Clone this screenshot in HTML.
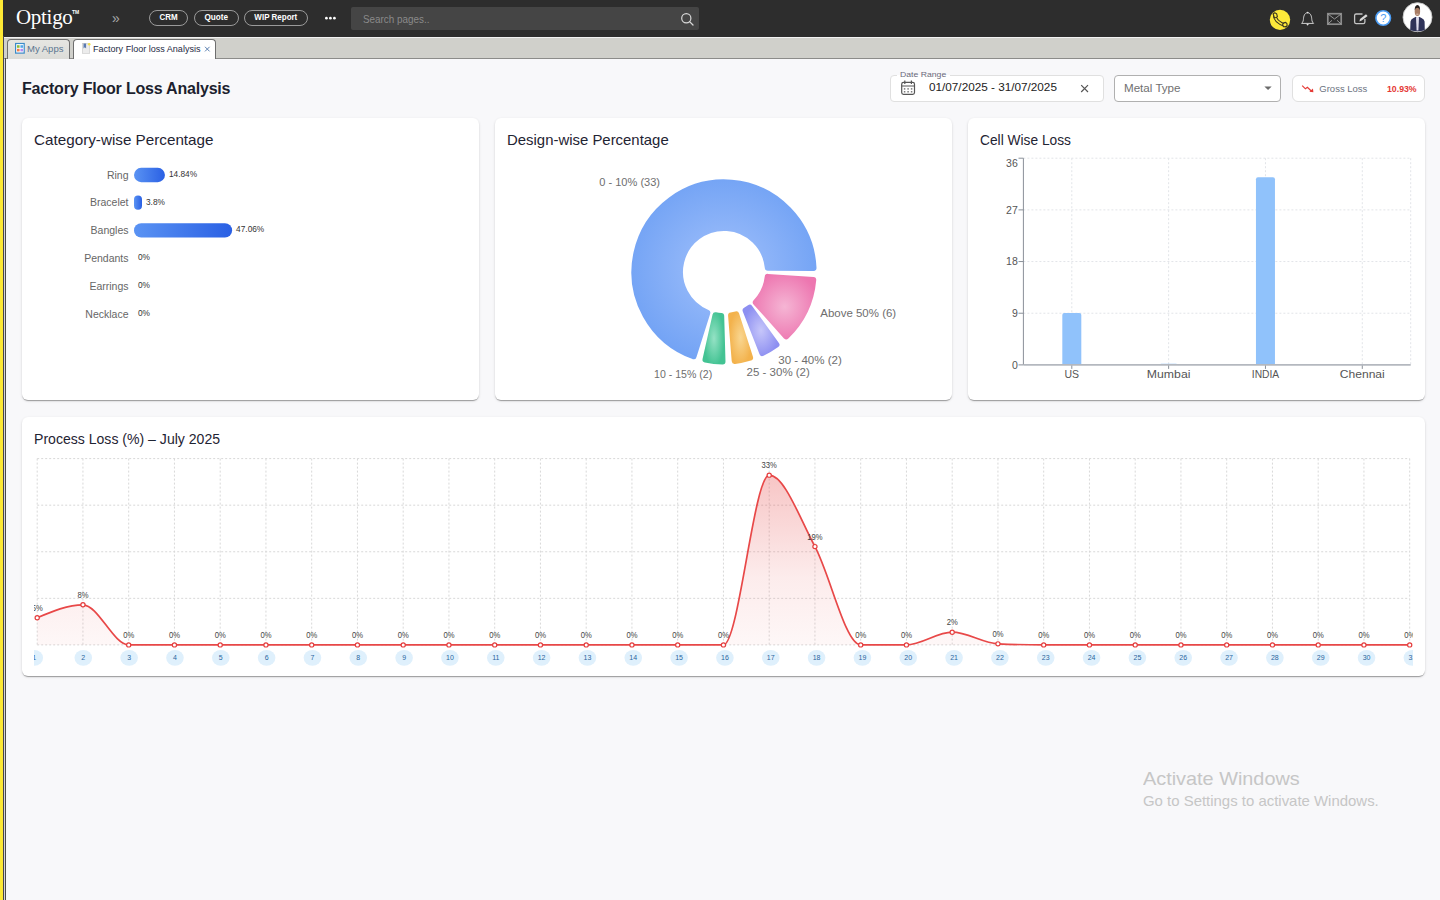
<!DOCTYPE html>
<html><head><meta charset="utf-8">
<style>
*{box-sizing:border-box;margin:0;padding:0}
html,body{width:1440px;height:900px;overflow:hidden;background:#f8f8fa;font-family:"Liberation Sans",sans-serif;position:relative}
.abs{position:absolute;white-space:nowrap;line-height:1}
#ybar{left:0;top:0;width:3px;height:900px;background:#fde935}
#top{left:3px;top:0;width:1437px;height:37px;background:#2d2d2d}
#topline{left:3px;top:37px;width:1437px;height:1px;background:#f2f2f2}
#tabs{left:3px;top:38px;width:1437px;height:21px;background:#d0d0cb;border-bottom:1px solid #8c8c8a}
#lline1{left:3px;top:36px;width:1px;height:864px;background:#48444e}
#lline0{left:4px;top:59px;width:1px;height:841px;background:#d6d6d6}
#lline2{left:5px;top:58px;width:1px;height:842px;background:#4a4a4a}
.pill{position:absolute;top:10px;height:16px;border:1px solid #9a9a9a;border-radius:8px;color:#fff;font-weight:bold;font-size:8.5px;line-height:13px;text-align:center}
.tab{position:absolute;top:39px;height:20px;border:1px solid #6e6e6e;border-bottom:none;border-radius:4px 4px 0 0;font-size:9.5px;line-height:1;color:#333}
.card{position:absolute;background:#fff;border-radius:6px;box-shadow:0 2px 1px -1px rgba(0,0,0,.2),0 1px 1px 0 rgba(0,0,0,.14),0 1px 3px 0 rgba(0,0,0,.12)}
.ctitle{position:absolute;left:12px;top:16px;font-size:13.75px;color:#1f2433;line-height:1;white-space:nowrap}
</style></head><body>
<div id="ybar" class="abs"></div>
<div id="top" class="abs"></div>
<div id="topline" class="abs"></div>
<div id="tabs" class="abs"></div>

<!-- logo -->
<div class="abs" style="left:16px;top:7px;font-family:'Liberation Serif',serif;font-size:21px;color:#fff;letter-spacing:-0.3px">Optigo</div>
<div class="abs" style="left:72px;top:10px;font-size:5px;color:#fff;font-weight:bold">TM</div>
<div class="abs" style="left:112px;top:11px;font-size:14px;color:#a8a8a8">&#187;</div>

<div class="pill" style="left:149px;width:39px"><span style="display:inline-block;transform:scaleX(.94)">CRM</span></div>
<div class="pill" style="left:194px;width:45px"><span style="display:inline-block;transform:scaleX(.96)">Quote</span></div>
<div class="pill" style="left:244px;width:64px"><span style="display:inline-block;transform:scaleX(.94)">WIP Report</span></div>

<div class="abs" style="left:351px;top:7px;width:348px;height:23px;background:#454545;border-radius:2px"></div>
<div class="abs" style="left:363px;top:13.7px;font-size:10.5px;color:#8a8a8a;transform:scaleX(0.94);transform-origin:0 0">Search pages..</div>

<!-- tabs -->
<div class="tab" style="left:7px;width:63px;background:linear-gradient(#e6e6e2,#dcdcd8)"><span style="position:absolute;left:19px;top:4px;color:#5a7590">My Apps</span></div>
<div class="tab" style="left:73px;width:143px;background:#fff"><span style="position:absolute;left:19px;top:4px;color:#1e2a44;transform:scaleX(.951);transform-origin:0 0">Factory Floor loss Analysis</span></div>

<div id="lline1" class="abs"></div>
<div id="lline0" class="abs"></div>
<div id="lline2" class="abs"></div>

<!-- header -->
<div class="abs" style="left:22px;top:81px;font-size:16px;font-weight:bold;color:#1c1f2e;letter-spacing:-0.2px">Factory Floor Loss Analysis</div>

<div class="abs" style="left:890px;top:75px;width:214px;height:27px;border:1px solid #e0e0e0;border-radius:4px;background:#fff"></div>
<div class="abs" style="left:897px;top:72px;width:53px;height:5px;background:#fff"></div><div class="abs" style="left:897px;top:72px;width:53px;height:3px;background:#f8f8fa"></div>
<div class="abs" style="left:900px;top:70.7px;font-size:7.5px;color:#6a6a7a;transform:scaleX(1.155);transform-origin:0 0">Date Range</div>
<div class="abs" style="left:929px;top:82px;font-size:11px;color:#222;transform:scaleX(1.067);transform-origin:0 0">01/07/2025 - 31/07/2025</div>

<div class="abs" style="left:1114px;top:75px;width:167px;height:27px;border:1px solid #b0b0b0;border-radius:4px;background:#fff"></div>
<div class="abs" style="left:1124px;top:84px;font-size:10px;color:#707070;transform:scaleX(1.16);transform-origin:0 0">Metal Type</div>

<div class="abs" style="left:1292px;top:75px;width:133px;height:27px;border:1px solid #e0e0e0;border-radius:6px;background:#fff"></div>
<div class="abs" style="left:1319.3px;top:83.8px;font-size:9.5px;color:#6b7280">Gross Loss</div>
<div class="abs" style="left:1386.6px;top:83.8px;font-size:9.5px;color:#e53935;font-weight:bold;transform:scaleX(0.92);transform-origin:0 0">10.93%</div>

<!-- cards -->
<div class="card" style="left:22px;top:118px;width:457px;height:282px"><div class="ctitle" style="transform:scaleX(1.108);transform-origin:0 0">Category-wise Percentage</div></div>
<div class="card" style="left:495px;top:118px;width:457px;height:282px"><div class="ctitle" style="transform:scaleX(1.085);transform-origin:0 0">Design-wise Percentage</div></div>
<div class="card" style="left:968px;top:118px;width:457px;height:282px"><div class="ctitle">Cell Wise Loss</div></div>
<div class="card" style="left:22px;top:417px;width:1403px;height:259px"><div class="ctitle" style="transform:scaleX(1.023);transform-origin:0 0">Process Loss (%) – July 2025</div></div>

<svg class="abs" style="left:0;top:0" width="1440" height="900" viewBox="0 0 1440 900" font-family="Liberation Sans, sans-serif"><defs><linearGradient id="gbar" x1="0" y1="0" x2="1" y2="0"><stop offset="0" stop-color="#5a93f3"/><stop offset="1" stop-color="#2a60e4"/></linearGradient><radialGradient id="g_blue" cx="0.5" cy="0.5" r="0.6"><stop offset="0" stop-color="#a2c1fb"/><stop offset="1" stop-color="#6ea0f4"/></radialGradient><radialGradient id="g_pink" cx="0.5" cy="0.5" r="0.6"><stop offset="0" stop-color="#f5b5d4"/><stop offset="1" stop-color="#ed76b0"/></radialGradient><radialGradient id="g_purple" cx="0.5" cy="0.5" r="0.6"><stop offset="0" stop-color="#c6c6fa"/><stop offset="1" stop-color="#8d8ff1"/></radialGradient><radialGradient id="g_orange" cx="0.5" cy="0.5" r="0.6"><stop offset="0" stop-color="#f9d690"/><stop offset="1" stop-color="#f3b24c"/></radialGradient><radialGradient id="g_green" cx="0.5" cy="0.5" r="0.6"><stop offset="0" stop-color="#95e2c5"/><stop offset="1" stop-color="#43c393"/></radialGradient><linearGradient id="garea" x1="0" y1="0" x2="0" y2="1"><stop offset="0" stop-color="#e53e3e" stop-opacity="0.3"/><stop offset="0.6" stop-color="#e53e3e" stop-opacity="0.1"/><stop offset="1" stop-color="#e53e3e" stop-opacity="0.04"/></linearGradient><clipPath id="clipPL"><rect x="34" y="440" width="1379" height="236"/></clipPath></defs><text x="128.5" y="178.8" text-anchor="end" font-size="10.5" fill="#666">Ring</text><rect x="134" y="167.8" width="30.94" height="14.4" rx="7.2" fill="url(#gbar)"/><text x="168.94" y="177" font-size="8.3" fill="#333">14.84%</text><text x="128.5" y="206.4" text-anchor="end" font-size="10.5" fill="#666">Bracelet</text><rect x="134" y="195.4" width="8" height="14.4" rx="4" fill="url(#gbar)"/><text x="146" y="204.6" font-size="8.3" fill="#333">3.8%</text><text x="128.5" y="234.2" text-anchor="end" font-size="10.5" fill="#666">Bangles</text><rect x="134" y="223.2" width="98.12" height="14.4" rx="7.2" fill="url(#gbar)"/><text x="236.12" y="232.4" font-size="8.3" fill="#333">47.06%</text><text x="128.5" y="262" text-anchor="end" font-size="10.5" fill="#666">Pendants</text><text x="138" y="260.2" font-size="8.3" fill="#333">0%</text><text x="128.5" y="289.8" text-anchor="end" font-size="10.5" fill="#666">Earrings</text><text x="138" y="288" font-size="8.3" fill="#333">0%</text><text x="128.5" y="317.6" text-anchor="end" font-size="10.5" fill="#666">Necklace</text><text x="138" y="315.8" font-size="8.3" fill="#333">0%</text><path d="M707.34 312.72 L693.56 356.27 A89.6 89.6 0 1 1 813.51 267.92 L767.8 267.82 A44 44 0 1 0 707.34 312.72 Z" fill="url(#g_blue)" stroke="url(#g_blue)" stroke-width="6.0" stroke-linejoin="round"/><path d="M767.73 276.87 L813.24 280 A89.6 89.6 0 0 1 786.25 336.44 L755.78 302.43 A44 44 0 0 0 767.73 276.87 Z" fill="url(#g_pink)" stroke="url(#g_pink)" stroke-width="6.0" stroke-linejoin="round"/><path d="M749.71 307.71 L776.46 344.64 A89.6 89.6 0 0 1 762.24 353.03 L745.57 310.35 A44 44 0 0 0 749.71 307.71 Z" fill="url(#g_purple)" stroke="url(#g_purple)" stroke-width="6.0" stroke-linejoin="round"/><path d="M736.17 314.28 L750.1 357.71 A89.6 89.6 0 0 1 734.7 360.96 L731.07 315.43 A44 44 0 0 0 736.17 314.28 Z" fill="url(#g_orange)" stroke="url(#g_orange)" stroke-width="6.0" stroke-linejoin="round"/><path d="M721.2 315.91 L722.5 361.59 A89.6 89.6 0 0 1 705.47 359.66 L715.49 315.17 A44 44 0 0 0 721.2 315.91 Z" fill="url(#g_green)" stroke="url(#g_green)" stroke-width="6.0" stroke-linejoin="round"/><text transform="translate(599.2 186.2) scale(0.98 1)" font-size="11.3" fill="#6e6e6e">0 - 10% (33)</text><text transform="translate(820.3 317.4) scale(1.016 1)" font-size="11.3" fill="#6e6e6e">Above 50% (6)</text><text transform="translate(778.3 364.1) scale(1.023 1)" font-size="11.3" fill="#6e6e6e">30 - 40% (2)</text><text transform="translate(746.6 376.3) scale(1.018 1)" font-size="11.3" fill="#6e6e6e">25 - 30% (2)</text><text transform="translate(654 377.8) scale(0.936 1)" font-size="11.3" fill="#6e6e6e">10 - 15% (2)</text><line x1="1018.5" y1="364.9" x2="1023.4" y2="364.9" stroke="#8a9099" stroke-width="1"/><text x="1017.8" y="368.7" font-size="10.5" fill="#555" text-anchor="end">0</text><line x1="1023.4" y1="313.22" x2="1410.7" y2="313.22" stroke="#e2e4e8" stroke-dasharray="2 2"/><line x1="1018.5" y1="313.22" x2="1023.4" y2="313.22" stroke="#8a9099" stroke-width="1"/><text x="1017.8" y="317.02" font-size="10.5" fill="#555" text-anchor="end">9</text><line x1="1023.4" y1="261.55" x2="1410.7" y2="261.55" stroke="#e2e4e8" stroke-dasharray="2 2"/><line x1="1018.5" y1="261.55" x2="1023.4" y2="261.55" stroke="#8a9099" stroke-width="1"/><text x="1017.8" y="265.35" font-size="10.5" fill="#555" text-anchor="end">18</text><line x1="1023.4" y1="209.88" x2="1410.7" y2="209.88" stroke="#e2e4e8" stroke-dasharray="2 2"/><line x1="1018.5" y1="209.88" x2="1023.4" y2="209.88" stroke="#8a9099" stroke-width="1"/><text x="1017.8" y="213.68" font-size="10.5" fill="#555" text-anchor="end">27</text><line x1="1023.4" y1="158.2" x2="1410.7" y2="158.2" stroke="#e2e4e8" stroke-dasharray="2 2"/><line x1="1018.5" y1="158.2" x2="1023.4" y2="158.2" stroke="#8a9099" stroke-width="1"/><text x="1017.8" y="166.8" font-size="10.5" fill="#555" text-anchor="end">36</text><line x1="1071.81" y1="158.2" x2="1071.81" y2="364.9" stroke="#e2e4e8" stroke-dasharray="2 2"/><line x1="1071.81" y1="364.9" x2="1071.81" y2="368.9" stroke="#8a9099"/><text transform="translate(1071.81 377.9) scale(1 1)" font-size="10.5" fill="#555" text-anchor="middle">US</text><line x1="1168.64" y1="158.2" x2="1168.64" y2="364.9" stroke="#e2e4e8" stroke-dasharray="2 2"/><line x1="1168.64" y1="364.9" x2="1168.64" y2="368.9" stroke="#8a9099"/><text transform="translate(1168.64 377.9) scale(1.17 1)" font-size="10.5" fill="#555" text-anchor="middle">Mumbai</text><line x1="1265.46" y1="158.2" x2="1265.46" y2="364.9" stroke="#e2e4e8" stroke-dasharray="2 2"/><line x1="1265.46" y1="364.9" x2="1265.46" y2="368.9" stroke="#8a9099"/><text transform="translate(1265.46 377.9) scale(0.98 1)" font-size="10.5" fill="#555" text-anchor="middle">INDIA</text><line x1="1362.29" y1="158.2" x2="1362.29" y2="364.9" stroke="#e2e4e8" stroke-dasharray="2 2"/><line x1="1362.29" y1="364.9" x2="1362.29" y2="368.9" stroke="#8a9099"/><text transform="translate(1362.29 377.9) scale(1.15 1)" font-size="10.5" fill="#555" text-anchor="middle">Chennai</text><line x1="1410.7" y1="158.2" x2="1410.7" y2="364.9" stroke="#e2e4e8" stroke-dasharray="2 2"/><path d="M1062.31 364.9 v-49.96 q0 -2 2 -2 h15 q2 0 2 2 v49.96 z" fill="#90c2fb"/><path d="M1159.14 364.9 v0.85 q0 -2 2 -2 h15 q2 0 2 2 v-0.85 z" fill="#90c2fb"/><path d="M1255.96 364.9 v-185.75 q0 -2 2 -2 h15 q2 0 2 2 v185.75 z" fill="#90c2fb"/><line x1="1023.4" y1="158.2" x2="1023.4" y2="364.9" stroke="#8a9099"/><line x1="1023.4" y1="364.9" x2="1410.7" y2="364.9" stroke="#b4b8bf" stroke-width="1.6"/><g clip-path="url(#clipPL)"><line x1="37.2" y1="644.9" x2="1409.7" y2="644.9" stroke="#d8d8d8" stroke-dasharray="2 2"/><line x1="37.2" y1="598.33" x2="1409.7" y2="598.33" stroke="#d8d8d8" stroke-dasharray="2 2"/><line x1="37.2" y1="551.75" x2="1409.7" y2="551.75" stroke="#d8d8d8" stroke-dasharray="2 2"/><line x1="37.2" y1="505.18" x2="1409.7" y2="505.18" stroke="#d8d8d8" stroke-dasharray="2 2"/><line x1="37.2" y1="458.6" x2="1409.7" y2="458.6" stroke="#d8d8d8" stroke-dasharray="2 2"/><line x1="37.2" y1="458.6" x2="37.2" y2="644.9" stroke="#d8d8d8" stroke-dasharray="2 2"/><line x1="82.95" y1="458.6" x2="82.95" y2="644.9" stroke="#d8d8d8" stroke-dasharray="2 2"/><line x1="128.7" y1="458.6" x2="128.7" y2="644.9" stroke="#d8d8d8" stroke-dasharray="2 2"/><line x1="174.45" y1="458.6" x2="174.45" y2="644.9" stroke="#d8d8d8" stroke-dasharray="2 2"/><line x1="220.2" y1="458.6" x2="220.2" y2="644.9" stroke="#d8d8d8" stroke-dasharray="2 2"/><line x1="265.95" y1="458.6" x2="265.95" y2="644.9" stroke="#d8d8d8" stroke-dasharray="2 2"/><line x1="311.7" y1="458.6" x2="311.7" y2="644.9" stroke="#d8d8d8" stroke-dasharray="2 2"/><line x1="357.45" y1="458.6" x2="357.45" y2="644.9" stroke="#d8d8d8" stroke-dasharray="2 2"/><line x1="403.2" y1="458.6" x2="403.2" y2="644.9" stroke="#d8d8d8" stroke-dasharray="2 2"/><line x1="448.95" y1="458.6" x2="448.95" y2="644.9" stroke="#d8d8d8" stroke-dasharray="2 2"/><line x1="494.7" y1="458.6" x2="494.7" y2="644.9" stroke="#d8d8d8" stroke-dasharray="2 2"/><line x1="540.45" y1="458.6" x2="540.45" y2="644.9" stroke="#d8d8d8" stroke-dasharray="2 2"/><line x1="586.2" y1="458.6" x2="586.2" y2="644.9" stroke="#d8d8d8" stroke-dasharray="2 2"/><line x1="631.95" y1="458.6" x2="631.95" y2="644.9" stroke="#d8d8d8" stroke-dasharray="2 2"/><line x1="677.7" y1="458.6" x2="677.7" y2="644.9" stroke="#d8d8d8" stroke-dasharray="2 2"/><line x1="723.45" y1="458.6" x2="723.45" y2="644.9" stroke="#d8d8d8" stroke-dasharray="2 2"/><line x1="769.2" y1="458.6" x2="769.2" y2="644.9" stroke="#d8d8d8" stroke-dasharray="2 2"/><line x1="814.95" y1="458.6" x2="814.95" y2="644.9" stroke="#d8d8d8" stroke-dasharray="2 2"/><line x1="860.7" y1="458.6" x2="860.7" y2="644.9" stroke="#d8d8d8" stroke-dasharray="2 2"/><line x1="906.45" y1="458.6" x2="906.45" y2="644.9" stroke="#d8d8d8" stroke-dasharray="2 2"/><line x1="952.2" y1="458.6" x2="952.2" y2="644.9" stroke="#d8d8d8" stroke-dasharray="2 2"/><line x1="997.95" y1="458.6" x2="997.95" y2="644.9" stroke="#d8d8d8" stroke-dasharray="2 2"/><line x1="1043.7" y1="458.6" x2="1043.7" y2="644.9" stroke="#d8d8d8" stroke-dasharray="2 2"/><line x1="1089.45" y1="458.6" x2="1089.45" y2="644.9" stroke="#d8d8d8" stroke-dasharray="2 2"/><line x1="1135.2" y1="458.6" x2="1135.2" y2="644.9" stroke="#d8d8d8" stroke-dasharray="2 2"/><line x1="1180.95" y1="458.6" x2="1180.95" y2="644.9" stroke="#d8d8d8" stroke-dasharray="2 2"/><line x1="1226.7" y1="458.6" x2="1226.7" y2="644.9" stroke="#d8d8d8" stroke-dasharray="2 2"/><line x1="1272.45" y1="458.6" x2="1272.45" y2="644.9" stroke="#d8d8d8" stroke-dasharray="2 2"/><line x1="1318.2" y1="458.6" x2="1318.2" y2="644.9" stroke="#d8d8d8" stroke-dasharray="2 2"/><line x1="1363.95" y1="458.6" x2="1363.95" y2="644.9" stroke="#d8d8d8" stroke-dasharray="2 2"/><line x1="1409.7" y1="458.6" x2="1409.7" y2="644.9" stroke="#d8d8d8" stroke-dasharray="2 2"/><path d="M37.2 617.73 C52.45 611.26 67.7 604.79 82.95 604.79 C98.2 604.79 113.45 644.9 128.7 644.9 C143.95 644.9 159.2 644.9 174.45 644.9 C189.7 644.9 204.95 644.9 220.2 644.9 C235.45 644.9 250.7 644.9 265.95 644.9 C281.2 644.9 296.45 644.9 311.7 644.9 C326.95 644.9 342.2 644.9 357.45 644.9 C372.7 644.9 387.95 644.9 403.2 644.9 C418.45 644.9 433.7 644.9 448.95 644.9 C464.2 644.9 479.45 644.9 494.7 644.9 C509.95 644.9 525.2 644.9 540.45 644.9 C555.7 644.9 570.95 644.9 586.2 644.9 C601.45 644.9 616.7 644.9 631.95 644.9 C647.2 644.9 662.45 644.9 677.7 644.9 C692.95 644.9 708.2 644.9 723.45 644.9 C738.7 644.9 753.95 475.16 769.2 475.16 C784.45 475.16 799.7 518.29 814.95 546.58 C830.2 574.87 845.45 644.9 860.7 644.9 C875.95 644.9 891.2 644.9 906.45 644.9 C921.7 644.9 936.95 632.22 952.2 632.22 C967.45 632.22 982.7 643.18 997.95 643.87 C1013.2 644.55 1028.45 644.9 1043.7 644.9 C1058.95 644.9 1074.2 644.9 1089.45 644.9 C1104.7 644.9 1119.95 644.9 1135.2 644.9 C1150.45 644.9 1165.7 644.9 1180.95 644.9 C1196.2 644.9 1211.45 644.9 1226.7 644.9 C1241.95 644.9 1257.2 644.9 1272.45 644.9 C1287.7 644.9 1302.95 644.9 1318.2 644.9 C1333.45 644.9 1348.7 644.9 1363.95 644.9 C1379.2 644.9 1394.45 644.9 1409.7 644.9 L1409.7 644.9 L37.2 644.9 Z" fill="url(#garea)"/><path d="M37.2 617.73 C52.45 611.26 67.7 604.79 82.95 604.79 C98.2 604.79 113.45 644.9 128.7 644.9 C143.95 644.9 159.2 644.9 174.45 644.9 C189.7 644.9 204.95 644.9 220.2 644.9 C235.45 644.9 250.7 644.9 265.95 644.9 C281.2 644.9 296.45 644.9 311.7 644.9 C326.95 644.9 342.2 644.9 357.45 644.9 C372.7 644.9 387.95 644.9 403.2 644.9 C418.45 644.9 433.7 644.9 448.95 644.9 C464.2 644.9 479.45 644.9 494.7 644.9 C509.95 644.9 525.2 644.9 540.45 644.9 C555.7 644.9 570.95 644.9 586.2 644.9 C601.45 644.9 616.7 644.9 631.95 644.9 C647.2 644.9 662.45 644.9 677.7 644.9 C692.95 644.9 708.2 644.9 723.45 644.9 C738.7 644.9 753.95 475.16 769.2 475.16 C784.45 475.16 799.7 518.29 814.95 546.58 C830.2 574.87 845.45 644.9 860.7 644.9 C875.95 644.9 891.2 644.9 906.45 644.9 C921.7 644.9 936.95 632.22 952.2 632.22 C967.45 632.22 982.7 643.18 997.95 643.87 C1013.2 644.55 1028.45 644.9 1043.7 644.9 C1058.95 644.9 1074.2 644.9 1089.45 644.9 C1104.7 644.9 1119.95 644.9 1135.2 644.9 C1150.45 644.9 1165.7 644.9 1180.95 644.9 C1196.2 644.9 1211.45 644.9 1226.7 644.9 C1241.95 644.9 1257.2 644.9 1272.45 644.9 C1287.7 644.9 1302.95 644.9 1318.2 644.9 C1333.45 644.9 1348.7 644.9 1363.95 644.9 C1379.2 644.9 1394.45 644.9 1409.7 644.9" fill="none" stroke="#e84848" stroke-width="1.7"/><circle cx="37.2" cy="617.73" r="2.1" fill="#fff" stroke="#e53e3e" stroke-width="1.2"/><text transform="translate(37.2 610.93) scale(0.9 1)" font-size="8.5" fill="#444" text-anchor="middle">5%</text><ellipse cx="34.3" cy="657.8" rx="8.8" ry="7.9" fill="#dff0fc"/><text x="34.3" y="660.3" font-size="7" fill="#2a66a0" text-anchor="middle">1</text><circle cx="82.95" cy="604.79" r="2.1" fill="#fff" stroke="#e53e3e" stroke-width="1.2"/><text transform="translate(82.95 597.99) scale(0.9 1)" font-size="8.5" fill="#444" text-anchor="middle">8%</text><ellipse cx="83.3" cy="657.8" rx="8.8" ry="7.9" fill="#dff0fc"/><text x="83.3" y="660.3" font-size="7" fill="#2a66a0" text-anchor="middle">2</text><circle cx="128.7" cy="644.9" r="2.1" fill="#fff" stroke="#e53e3e" stroke-width="1.2"/><text transform="translate(128.7 638.1) scale(0.9 1)" font-size="8.5" fill="#444" text-anchor="middle">0%</text><ellipse cx="129.13" cy="657.8" rx="8.8" ry="7.9" fill="#dff0fc"/><text x="129.13" y="660.3" font-size="7" fill="#2a66a0" text-anchor="middle">3</text><circle cx="174.45" cy="644.9" r="2.1" fill="#fff" stroke="#e53e3e" stroke-width="1.2"/><text transform="translate(174.45 638.1) scale(0.9 1)" font-size="8.5" fill="#444" text-anchor="middle">0%</text><ellipse cx="174.96" cy="657.8" rx="8.8" ry="7.9" fill="#dff0fc"/><text x="174.96" y="660.3" font-size="7" fill="#2a66a0" text-anchor="middle">4</text><circle cx="220.2" cy="644.9" r="2.1" fill="#fff" stroke="#e53e3e" stroke-width="1.2"/><text transform="translate(220.2 638.1) scale(0.9 1)" font-size="8.5" fill="#444" text-anchor="middle">0%</text><ellipse cx="220.79" cy="657.8" rx="8.8" ry="7.9" fill="#dff0fc"/><text x="220.79" y="660.3" font-size="7" fill="#2a66a0" text-anchor="middle">5</text><circle cx="265.95" cy="644.9" r="2.1" fill="#fff" stroke="#e53e3e" stroke-width="1.2"/><text transform="translate(265.95 638.1) scale(0.9 1)" font-size="8.5" fill="#444" text-anchor="middle">0%</text><ellipse cx="266.62" cy="657.8" rx="8.8" ry="7.9" fill="#dff0fc"/><text x="266.62" y="660.3" font-size="7" fill="#2a66a0" text-anchor="middle">6</text><circle cx="311.7" cy="644.9" r="2.1" fill="#fff" stroke="#e53e3e" stroke-width="1.2"/><text transform="translate(311.7 638.1) scale(0.9 1)" font-size="8.5" fill="#444" text-anchor="middle">0%</text><ellipse cx="312.45" cy="657.8" rx="8.8" ry="7.9" fill="#dff0fc"/><text x="312.45" y="660.3" font-size="7" fill="#2a66a0" text-anchor="middle">7</text><circle cx="357.45" cy="644.9" r="2.1" fill="#fff" stroke="#e53e3e" stroke-width="1.2"/><text transform="translate(357.45 638.1) scale(0.9 1)" font-size="8.5" fill="#444" text-anchor="middle">0%</text><ellipse cx="358.28" cy="657.8" rx="8.8" ry="7.9" fill="#dff0fc"/><text x="358.28" y="660.3" font-size="7" fill="#2a66a0" text-anchor="middle">8</text><circle cx="403.2" cy="644.9" r="2.1" fill="#fff" stroke="#e53e3e" stroke-width="1.2"/><text transform="translate(403.2 638.1) scale(0.9 1)" font-size="8.5" fill="#444" text-anchor="middle">0%</text><ellipse cx="404.11" cy="657.8" rx="8.8" ry="7.9" fill="#dff0fc"/><text x="404.11" y="660.3" font-size="7" fill="#2a66a0" text-anchor="middle">9</text><circle cx="448.95" cy="644.9" r="2.1" fill="#fff" stroke="#e53e3e" stroke-width="1.2"/><text transform="translate(448.95 638.1) scale(0.9 1)" font-size="8.5" fill="#444" text-anchor="middle">0%</text><ellipse cx="449.94" cy="657.8" rx="8.8" ry="7.9" fill="#dff0fc"/><text x="449.94" y="660.3" font-size="7" fill="#2a66a0" text-anchor="middle">10</text><circle cx="494.7" cy="644.9" r="2.1" fill="#fff" stroke="#e53e3e" stroke-width="1.2"/><text transform="translate(494.7 638.1) scale(0.9 1)" font-size="8.5" fill="#444" text-anchor="middle">0%</text><ellipse cx="495.77" cy="657.8" rx="8.8" ry="7.9" fill="#dff0fc"/><text x="495.77" y="660.3" font-size="7" fill="#2a66a0" text-anchor="middle">11</text><circle cx="540.45" cy="644.9" r="2.1" fill="#fff" stroke="#e53e3e" stroke-width="1.2"/><text transform="translate(540.45 638.1) scale(0.9 1)" font-size="8.5" fill="#444" text-anchor="middle">0%</text><ellipse cx="541.6" cy="657.8" rx="8.8" ry="7.9" fill="#dff0fc"/><text x="541.6" y="660.3" font-size="7" fill="#2a66a0" text-anchor="middle">12</text><circle cx="586.2" cy="644.9" r="2.1" fill="#fff" stroke="#e53e3e" stroke-width="1.2"/><text transform="translate(586.2 638.1) scale(0.9 1)" font-size="8.5" fill="#444" text-anchor="middle">0%</text><ellipse cx="587.43" cy="657.8" rx="8.8" ry="7.9" fill="#dff0fc"/><text x="587.43" y="660.3" font-size="7" fill="#2a66a0" text-anchor="middle">13</text><circle cx="631.95" cy="644.9" r="2.1" fill="#fff" stroke="#e53e3e" stroke-width="1.2"/><text transform="translate(631.95 638.1) scale(0.9 1)" font-size="8.5" fill="#444" text-anchor="middle">0%</text><ellipse cx="633.26" cy="657.8" rx="8.8" ry="7.9" fill="#dff0fc"/><text x="633.26" y="660.3" font-size="7" fill="#2a66a0" text-anchor="middle">14</text><circle cx="677.7" cy="644.9" r="2.1" fill="#fff" stroke="#e53e3e" stroke-width="1.2"/><text transform="translate(677.7 638.1) scale(0.9 1)" font-size="8.5" fill="#444" text-anchor="middle">0%</text><ellipse cx="679.09" cy="657.8" rx="8.8" ry="7.9" fill="#dff0fc"/><text x="679.09" y="660.3" font-size="7" fill="#2a66a0" text-anchor="middle">15</text><circle cx="723.45" cy="644.9" r="2.1" fill="#fff" stroke="#e53e3e" stroke-width="1.2"/><text transform="translate(723.45 638.1) scale(0.9 1)" font-size="8.5" fill="#444" text-anchor="middle">0%</text><ellipse cx="724.92" cy="657.8" rx="8.8" ry="7.9" fill="#dff0fc"/><text x="724.92" y="660.3" font-size="7" fill="#2a66a0" text-anchor="middle">16</text><circle cx="769.2" cy="475.16" r="2.1" fill="#fff" stroke="#e53e3e" stroke-width="1.2"/><text transform="translate(769.2 468.36) scale(0.9 1)" font-size="8.5" fill="#444" text-anchor="middle">33%</text><ellipse cx="770.75" cy="657.8" rx="8.8" ry="7.9" fill="#dff0fc"/><text x="770.75" y="660.3" font-size="7" fill="#2a66a0" text-anchor="middle">17</text><circle cx="814.95" cy="546.58" r="2.1" fill="#fff" stroke="#e53e3e" stroke-width="1.2"/><text transform="translate(814.95 539.78) scale(0.9 1)" font-size="8.5" fill="#444" text-anchor="middle">19%</text><ellipse cx="816.58" cy="657.8" rx="8.8" ry="7.9" fill="#dff0fc"/><text x="816.58" y="660.3" font-size="7" fill="#2a66a0" text-anchor="middle">18</text><circle cx="860.7" cy="644.9" r="2.1" fill="#fff" stroke="#e53e3e" stroke-width="1.2"/><text transform="translate(860.7 638.1) scale(0.9 1)" font-size="8.5" fill="#444" text-anchor="middle">0%</text><ellipse cx="862.41" cy="657.8" rx="8.8" ry="7.9" fill="#dff0fc"/><text x="862.41" y="660.3" font-size="7" fill="#2a66a0" text-anchor="middle">19</text><circle cx="906.45" cy="644.9" r="2.1" fill="#fff" stroke="#e53e3e" stroke-width="1.2"/><text transform="translate(906.45 638.1) scale(0.9 1)" font-size="8.5" fill="#444" text-anchor="middle">0%</text><ellipse cx="908.24" cy="657.8" rx="8.8" ry="7.9" fill="#dff0fc"/><text x="908.24" y="660.3" font-size="7" fill="#2a66a0" text-anchor="middle">20</text><circle cx="952.2" cy="632.22" r="2.1" fill="#fff" stroke="#e53e3e" stroke-width="1.2"/><text transform="translate(952.2 625.42) scale(0.9 1)" font-size="8.5" fill="#444" text-anchor="middle">2%</text><ellipse cx="954.07" cy="657.8" rx="8.8" ry="7.9" fill="#dff0fc"/><text x="954.07" y="660.3" font-size="7" fill="#2a66a0" text-anchor="middle">21</text><circle cx="997.95" cy="643.87" r="2.1" fill="#fff" stroke="#e53e3e" stroke-width="1.2"/><text transform="translate(997.95 637.07) scale(0.9 1)" font-size="8.5" fill="#444" text-anchor="middle">0%</text><ellipse cx="999.9" cy="657.8" rx="8.8" ry="7.9" fill="#dff0fc"/><text x="999.9" y="660.3" font-size="7" fill="#2a66a0" text-anchor="middle">22</text><circle cx="1043.7" cy="644.9" r="2.1" fill="#fff" stroke="#e53e3e" stroke-width="1.2"/><text transform="translate(1043.7 638.1) scale(0.9 1)" font-size="8.5" fill="#444" text-anchor="middle">0%</text><ellipse cx="1045.73" cy="657.8" rx="8.8" ry="7.9" fill="#dff0fc"/><text x="1045.73" y="660.3" font-size="7" fill="#2a66a0" text-anchor="middle">23</text><circle cx="1089.45" cy="644.9" r="2.1" fill="#fff" stroke="#e53e3e" stroke-width="1.2"/><text transform="translate(1089.45 638.1) scale(0.9 1)" font-size="8.5" fill="#444" text-anchor="middle">0%</text><ellipse cx="1091.56" cy="657.8" rx="8.8" ry="7.9" fill="#dff0fc"/><text x="1091.56" y="660.3" font-size="7" fill="#2a66a0" text-anchor="middle">24</text><circle cx="1135.2" cy="644.9" r="2.1" fill="#fff" stroke="#e53e3e" stroke-width="1.2"/><text transform="translate(1135.2 638.1) scale(0.9 1)" font-size="8.5" fill="#444" text-anchor="middle">0%</text><ellipse cx="1137.39" cy="657.8" rx="8.8" ry="7.9" fill="#dff0fc"/><text x="1137.39" y="660.3" font-size="7" fill="#2a66a0" text-anchor="middle">25</text><circle cx="1180.95" cy="644.9" r="2.1" fill="#fff" stroke="#e53e3e" stroke-width="1.2"/><text transform="translate(1180.95 638.1) scale(0.9 1)" font-size="8.5" fill="#444" text-anchor="middle">0%</text><ellipse cx="1183.22" cy="657.8" rx="8.8" ry="7.9" fill="#dff0fc"/><text x="1183.22" y="660.3" font-size="7" fill="#2a66a0" text-anchor="middle">26</text><circle cx="1226.7" cy="644.9" r="2.1" fill="#fff" stroke="#e53e3e" stroke-width="1.2"/><text transform="translate(1226.7 638.1) scale(0.9 1)" font-size="8.5" fill="#444" text-anchor="middle">0%</text><ellipse cx="1229.05" cy="657.8" rx="8.8" ry="7.9" fill="#dff0fc"/><text x="1229.05" y="660.3" font-size="7" fill="#2a66a0" text-anchor="middle">27</text><circle cx="1272.45" cy="644.9" r="2.1" fill="#fff" stroke="#e53e3e" stroke-width="1.2"/><text transform="translate(1272.45 638.1) scale(0.9 1)" font-size="8.5" fill="#444" text-anchor="middle">0%</text><ellipse cx="1274.88" cy="657.8" rx="8.8" ry="7.9" fill="#dff0fc"/><text x="1274.88" y="660.3" font-size="7" fill="#2a66a0" text-anchor="middle">28</text><circle cx="1318.2" cy="644.9" r="2.1" fill="#fff" stroke="#e53e3e" stroke-width="1.2"/><text transform="translate(1318.2 638.1) scale(0.9 1)" font-size="8.5" fill="#444" text-anchor="middle">0%</text><ellipse cx="1320.71" cy="657.8" rx="8.8" ry="7.9" fill="#dff0fc"/><text x="1320.71" y="660.3" font-size="7" fill="#2a66a0" text-anchor="middle">29</text><circle cx="1363.95" cy="644.9" r="2.1" fill="#fff" stroke="#e53e3e" stroke-width="1.2"/><text transform="translate(1363.95 638.1) scale(0.9 1)" font-size="8.5" fill="#444" text-anchor="middle">0%</text><ellipse cx="1366.54" cy="657.8" rx="8.8" ry="7.9" fill="#dff0fc"/><text x="1366.54" y="660.3" font-size="7" fill="#2a66a0" text-anchor="middle">30</text><circle cx="1409.7" cy="644.9" r="2.1" fill="#fff" stroke="#e53e3e" stroke-width="1.2"/><text transform="translate(1409.7 638.1) scale(0.9 1)" font-size="8.5" fill="#444" text-anchor="middle">0%</text><ellipse cx="1412.37" cy="657.8" rx="8.8" ry="7.9" fill="#dff0fc"/><text x="1412.37" y="660.3" font-size="7" fill="#2a66a0" text-anchor="middle">31</text></g><g fill="#fff"><circle cx="326.4" cy="18.2" r="1.35"/><circle cx="330.4" cy="18.2" r="1.35"/><circle cx="334.4" cy="18.2" r="1.35"/></g><circle cx="686.3" cy="18.3" r="4.6" fill="none" stroke="#d8d8d8" stroke-width="1.2"/><line x1="689.6" y1="21.6" x2="693" y2="25" stroke="#d8d8d8" stroke-width="1.3" stroke-linecap="round"/><circle cx="1280" cy="19.85" r="10.2" fill="#fde93a"/><path d="M1274.6 14.2 Q1274.2 21.6 1285.6 25.6" fill="none" stroke="#3a3620" stroke-width="3.6" stroke-linecap="round"/><path d="M1274.6 14.2 Q1274.2 21.6 1285.6 25.6" fill="none" stroke="#fde93a" stroke-width="1.5" stroke-linecap="round"/><path d="M1273.2 13.8 Q1274.6 12.4 1276.6 13.6 L1277.4 16.6 Q1276 18 1274.4 17.6 Z M1285.8 22.4 Q1287.6 23.4 1287 25.8 Q1285.6 27.2 1283.4 26.6 L1282.6 24.2 Q1283.6 22.4 1285.8 22.4 Z" fill="#fde93a" stroke="#3a3620" stroke-width="1.1" stroke-linejoin="round"/><path d="M1307.6 12.6 C1304.2 13.2 1303.6 16.5 1303.4 19.5 C1303.2 21.6 1302.4 22.6 1301.6 23.4 L1313.6 23.4 C1312.8 22.6 1312 21.6 1311.8 19.5 C1311.6 16.5 1311 13.2 1307.6 12.6 Z" fill="none" stroke="#d0d0d0" stroke-width="1"/><path d="M1306.3 24 L1308.9 24 L1307.6 25.8 Z" fill="#e0e0e0"/><circle cx="1307.6" cy="12.6" r="0.9" fill="#e0e0e0"/><rect x="1327.8" y="13.7" width="13.4" height="10.5" fill="none" stroke="#8c8c8c" stroke-width="1.7"/><path d="M1328 14 L1334.5 19 L1341 14 M1328 23.8 L1332 20.3 M1341 23.8 L1337 20.3" fill="none" stroke="#a0a0a0" stroke-width="0.9"/><path d="M1362.5 14 H1356.2 Q1354.6 14 1354.6 15.6 V22 Q1354.6 23.6 1356.2 23.6 H1363.3 Q1364.9 23.6 1364.9 22 V19" fill="none" stroke="#c4c4c4" stroke-width="1.3"/><path d="M1359.4 21.4 L1360 19 L1366 14.3 L1367.6 15.9 L1361.7 20.6 Z" fill="#d8d8d8"/><circle cx="1383.2" cy="18" r="7.3" fill="#fff" stroke="#4b9df5" stroke-width="1.6"/><text x="1383.3" y="22.2" font-size="11" fill="#4b9df5" text-anchor="middle">?</text><circle cx="1417.5" cy="17.2" r="14.5" fill="#fff" stroke="#c8c8c8" stroke-width="0.9"/><path d="M1410.2 30.3 L1410.5 21.5 Q1410.8 19 1413.5 18 L1416 16.8 L1417.5 18.5 L1419 16.8 L1421.5 18 Q1424.3 19 1424.6 21.5 L1424.8 30.3 Q1417.5 32.2 1410.2 30.3 Z" fill="#2f3359"/><path d="M1416 17.2 L1419 17.2 L1418.4 30.6 L1416.6 30.6 Z" fill="#dddced"/><ellipse cx="1417.4" cy="11.6" rx="2.7" ry="4.5" fill="#a87c64"/><path d="M1414.7 10.4 Q1414.6 5.3 1417.4 5.1 Q1420.2 5.3 1420.1 10.4 Q1419.6 8 1417.4 7.8 Q1415.2 8 1414.7 10.4 Z" fill="#241c1a"/><rect x="1416.3" y="13.8" width="2.2" height="0.7" fill="#f0e8e0"/><rect x="15.6" y="43.5" width="8.6" height="9.6" fill="#fff" stroke="#3b8bc8" stroke-width="1.2"/><rect x="17" y="45.2" width="2.6" height="2.6" fill="#8bbd3a"/><rect x="20.4" y="45.2" width="2.6" height="2.6" fill="#55a8e8"/><rect x="17" y="48.8" width="2.6" height="2.6" fill="#f77a45"/><rect x="20.4" y="48.8" width="2.6" height="2.6" fill="#b38bf0"/><rect x="82.3" y="43.4" width="7.4" height="10" fill="#ececec" stroke="#c8c8c8" stroke-width="0.6"/><path d="M83.5 43.4 V48.5 L84.8 47.3 L86.1 48.5 V43.4 Z" fill="#5a7ab0"/><circle cx="89.2" cy="44.3" r="1.3" fill="#f2e04a"/><path d="M205 46.8 L209.6 51.4 M209.6 46.8 L205 51.4" stroke="#5b7fb0" stroke-width="1"/><rect x="901.7" y="82.4" width="12.8" height="12" rx="1.8" fill="none" stroke="#555" stroke-width="1.2"/><line x1="901.7" y1="86" x2="914.5" y2="86" stroke="#555" stroke-width="1"/><line x1="904.8" y1="80.6" x2="904.8" y2="84" stroke="#555" stroke-width="1.2"/><line x1="911.4" y1="80.6" x2="911.4" y2="84" stroke="#555" stroke-width="1.2"/><g fill="#666"><rect x="903.85" y="88.25" width="1.5" height="1.3"/><rect x="907.35" y="88.25" width="1.5" height="1.3"/><rect x="910.85" y="88.25" width="1.5" height="1.3"/><rect x="903.85" y="91.14999999999999" width="1.5" height="1.3"/><rect x="907.35" y="91.14999999999999" width="1.5" height="1.3"/><rect x="910.85" y="91.14999999999999" width="1.5" height="1.3"/></g><path d="M1081.2 85.2 L1088 92 M1088 85.2 L1081.2 92" stroke="#555" stroke-width="1.2"/><path d="M1264.4 86.4 L1271.7 86.4 L1268.05 90.1 Z" fill="#6b6b6b"/><path d="M1302.2 85.6 L1305.4 88.8 L1307.4 87.3 L1311.3 91" fill="none" stroke="#e53935" stroke-width="1.2"/><path d="M1309.4 91.8 L1313.4 92.2 L1312.9 88.4 Z" fill="#e53935"/></svg>
<!-- activate windows -->
<div class="abs" style="left:1143px;top:769px;font-size:19px;color:#c6c6c6;transform:scaleX(1.045);transform-origin:0 0">Activate Windows</div>
<div class="abs" style="left:1143px;top:794px;font-size:14.5px;color:#c6c6c6;transform:scaleX(1.03);transform-origin:0 0">Go to Settings to activate Windows.</div>

</body></html>
